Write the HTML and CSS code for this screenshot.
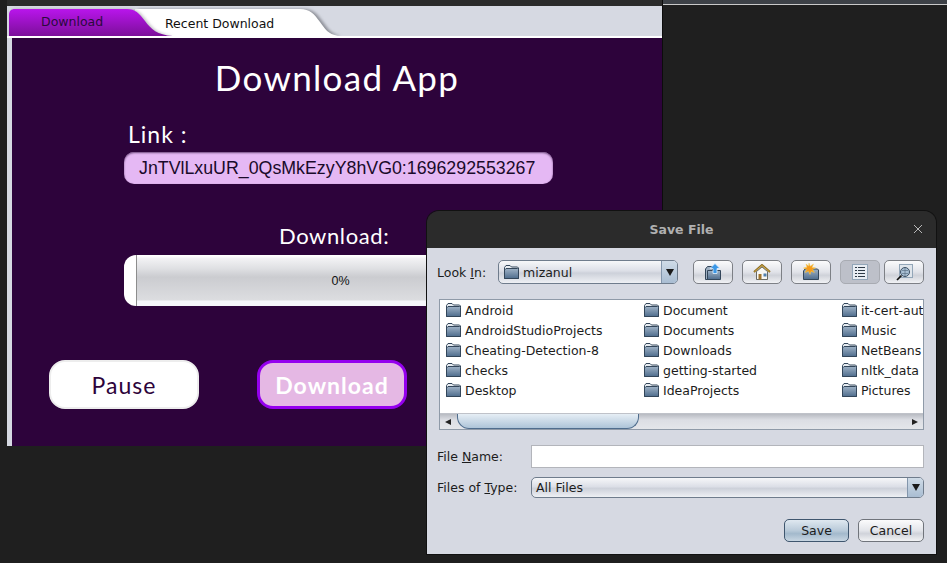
FILE: index.html
```html
<!DOCTYPE html>
<html>
<head>
  <meta charset="UTF-8">
  <title>Download App</title>
  <link rel="stylesheet" href="styles.css">
</head>
<body>
  <svg class="defs" width="0" height="0">
    <defs>
      <linearGradient id="folder-fill" x1="0" y1="0" x2="0" y2="1">
        <stop offset="0" stop-color="#9fb2c6"/>
        <stop offset="1" stop-color="#4f6d8d"/>
      </linearGradient>
      <linearGradient id="tab-on" x1="0" y1="0" x2="0" y2="1">
        <stop offset="0" stop-color="#b915ec"/>
        <stop offset="1" stop-color="#7c0f9a"/>
      </linearGradient>
      <filter id="tab-blur"><feGaussianBlur stdDeviation="1.6"/></filter>
      <symbol id="folder" viewBox="0 0 16 16">
        <path d="M1.5 14.5V3.5L3 1.5h4l1.5 1.5h6l1 1v10.500z" fill="#e8edf2" stroke="#33465a"/>
        <path d="M1.500 14.500V6L3 4.500h11.500l1 1v9z" fill="url(#folder-fill)" stroke="#33465a"/>
      </symbol>
    </defs>
  </svg>

  <div class="top-strip"></div>

  <div class="app-window">
    <div class="app-titlebar"></div>
    <div class="tab-bar">
      <svg class="tab-shapes" width="340" height="30" viewBox="0 0 340 30">
        <path d="M128 30V3h165c10 0 14 5 20 13 5 7 8 12 18 14z" fill="#8d9098" filter="url(#tab-blur)" transform="translate(3 0)"/>
        <path d="M128 30V3h165c10 0 14 5 20 13 5 7 8 12 18 14z" fill="#fff"/>
        <path d="M2 30V9c0-4 2-6 6-6h112c8 0 12 4 18 12 6 8 12 14 28 15z" fill="#8f9096" filter="url(#tab-blur)" opacity=".55" transform="translate(2 0)"/>
        <path d="M2 30V9c0-4 2-6 6-6h112c8 0 12 4 18 12 6 8 12 14 28 15z" fill="url(#tab-on)"/>
      </svg>
      <span class="tab tab-active">Download</span>
      <span class="tab">Recent Download</span>
    </div>
    <div class="tab-rule"></div>
    <div class="app-panel">
      <h1 class="app-title">Download App</h1>
      <div class="link-label">Link :</div>
      <div class="link-input">JnTVlLxuUR_0QsMkEzyY8hVG0:1696292553267</div>
      <div class="progress-label">Download:</div>
      <div class="progress">
        <div class="progress-cap"></div>
        <div class="progress-bar">0%</div>
      </div>
      <div class="app-actions">
        <button class="app-btn btn-pause">Pause</button>
        <button class="app-btn btn-download">Download</button>
      </div>
    </div>
  </div>

  <div class="dialog">
    <div class="dialog-titlebar">
      <span class="dialog-title">Save File</span>
      <svg class="dialog-close" width="10" height="10" viewBox="0 0 10 10"><path d="M1 1l8 8M9 1l-8 8" stroke="#b8b8b8"/></svg>
    </div>
    <div class="dialog-body">
      <div class="toolbar">
        <label class="look-label">Look <u>I</u>n:</label>
        <div class="combo combo-look">
          <svg class="icon" width="16" height="16"><use href="#folder"/></svg>
          <span class="combo-text">mizanul</span>
          <span class="combo-arrow"><i></i></span>
        </div>
        <div class="tool-group">
          <button class="tool-btn">
            <svg width="20" height="18" viewBox="0 0 20 18">
              <path d="M2.500 16.500V6l2-2.500h5v13z" fill="#9fb0c2" stroke="#33465a"/>
              <path d="M4.500 16.500V7.500h13v9z" fill="url(#folder-fill)" stroke="#33465a"/>
              <path d="M12 .5l5 5h-3v5h-4v-5H7z" fill="#3b97e6" stroke="#dff0ff" stroke-width=".8"/>
            </svg>
          </button>
          <button class="tool-btn">
            <svg width="18" height="16" viewBox="0 0 18 16">
              <path d="M1 8l8-7 8 7" fill="none" stroke="#8a6a1e" stroke-width="2"/>
              <path d="M1.500 7.800L9 1.500l7.500 6.300" fill="none" stroke="#e3bb55" stroke-width=".8"/>
              <path d="M3.500 7.500V15.500h11V7.500L9 3z" fill="#f7f7f4" stroke="#4a4a40" stroke-width=".8"/>
              <rect x="5.500" y="10" width="3" height="5.500" fill="#a0742c"/>
              <rect x="10.500" y="9.500" width="3" height="3" fill="#4f7fae"/>
            </svg>
          </button>
          <button class="tool-btn">
            <svg width="18" height="18" viewBox="0 0 18 18">
              <path d="M1.500 16.500V8l1.500-2h12.500l1 1v9.500z" fill="url(#folder-fill)" stroke="#33465a"/>
              <path d="M7 0l1.200 3.200L11.500 1 10 4.400l3.500.4-3 1.800 2 2.800-3.400-1L8 11.500 6.500 8.300 3 9.500l1.800-3L1.500 5l3.500-.7L4 1l2.600 2z" fill="#f59a1b" stroke="#f2d15c" stroke-width=".5"/>
            </svg>
          </button>
          <button class="tool-btn tool-btn-on">
            <svg width="16" height="16" viewBox="0 0 16 16">
              <rect x=".5" y=".5" width="15" height="15" fill="#e8edf3" stroke="#93a6b8"/>
              <path d="M3 3.500h2M6 3.500h7M3 6.500h2M6 6.500h7M3 9.500h2M6 9.500h7M3 12.500h2M6 12.500h7" stroke="#2e3a46"/>
            </svg>
          </button>
          <button class="tool-btn">
            <svg width="17" height="17" viewBox="0 0 17 17">
              <rect x="3.500" y=".5" width="13" height="13" fill="#dfe5eb" stroke="#93a6b8"/>
              <circle cx="9" cy="8" r="4.500" fill="#a9bfd3" stroke="#3d5064"/>
              <path d="M6 6.500h6M6 9.500h6M9 4v8" stroke="#5e7488" stroke-width=".7"/>
              <path d="M5.500 11.500L1 16" stroke="#111" stroke-width="1.700"/>
            </svg>
          </button>
        </div>
      </div>

      <div class="file-list">
        <div class="file-columns">
          <div class="file-column">
            <div class="file-row"><svg class="icon" width="16" height="16"><use href="#folder"/></svg>Android</div>
            <div class="file-row"><svg class="icon" width="16" height="16"><use href="#folder"/></svg>AndroidStudioProjects</div>
            <div class="file-row"><svg class="icon" width="16" height="16"><use href="#folder"/></svg>Cheating-Detection-8</div>
            <div class="file-row"><svg class="icon" width="16" height="16"><use href="#folder"/></svg>checks</div>
            <div class="file-row"><svg class="icon" width="16" height="16"><use href="#folder"/></svg>Desktop</div>
          </div>
          <div class="file-column">
            <div class="file-row"><svg class="icon" width="16" height="16"><use href="#folder"/></svg>Document</div>
            <div class="file-row"><svg class="icon" width="16" height="16"><use href="#folder"/></svg>Documents</div>
            <div class="file-row"><svg class="icon" width="16" height="16"><use href="#folder"/></svg>Downloads</div>
            <div class="file-row"><svg class="icon" width="16" height="16"><use href="#folder"/></svg>getting-started</div>
            <div class="file-row"><svg class="icon" width="16" height="16"><use href="#folder"/></svg>IdeaProjects</div>
          </div>
          <div class="file-column file-column-last">
            <div class="file-row"><svg class="icon" width="16" height="16"><use href="#folder"/></svg>it-cert-aut</div>
            <div class="file-row"><svg class="icon" width="16" height="16"><use href="#folder"/></svg>Music</div>
            <div class="file-row"><svg class="icon" width="16" height="16"><use href="#folder"/></svg>NetBeans</div>
            <div class="file-row"><svg class="icon" width="16" height="16"><use href="#folder"/></svg>nltk_data</div>
            <div class="file-row"><svg class="icon" width="16" height="16"><use href="#folder"/></svg>Pictures</div>
          </div>
        </div>
        <div class="scrollbar">
          <span class="scroll-arrow scroll-left"></span>
          <div class="scroll-track"><div class="scroll-thumb"></div></div>
          <span class="scroll-arrow scroll-right"></span>
        </div>
      </div>

      <div class="form-row form-row-name">
        <label class="form-label">File <u>N</u>ame:</label>
        <div class="text-field"></div>
      </div>
      <div class="form-row form-row-type">
        <label class="form-label">Files of <u>T</u>ype:</label>
        <div class="combo combo-type">
          <span class="combo-text">All Files</span>
          <span class="combo-arrow"><i></i></span>
        </div>
      </div>

      <div class="dialog-actions">
        <button class="swing-btn swing-btn-default">Save</button>
        <button class="swing-btn">Cancel</button>
      </div>
    </div>
  </div>
</body>
</html>
```

FILE: styles.css
```css
html, body {
  margin: 0;
  padding: 0;
  height: 100%;
  overflow: hidden;
}

body {
  background-color: #1f1f1f;
  position: relative;
  font-family: "DejaVu Sans", sans-serif;
}

.defs {
  position: absolute;
}

.top-strip {
  position: absolute;
  left: 663px;
  right: 0;
  top: 0;
  height: 4px;
  background-color: #3d4147;
  border-bottom: 1px solid #c9c9c9;
}

/* app window */
.app-window {
  position: absolute;
  left: 7px;
  top: 0;
  width: 655px;
  height: 446px;
  display: flex;
  flex-direction: column;
  background-color: #d6d9e2;
  border-right: 1px solid #0c0c0c;
}

.app-titlebar {
  height: 6px;
  background-color: #2b2b2b;
}

.tab-bar {
  position: relative;
  height: 30px;
  display: flex;
  font-size: 12.500px;
}

.tab-shapes {
  position: absolute;
  left: 0;
  top: 0;
}

.tab {
  position: relative;
  padding: 10px 0 0 25px;
  color: #111;
}

.tab-active {
  width: 99px;
  padding: 8px 0 0 34px;
  color: #2a0a3c;
}

.tab-rule {
  height: 2px;
  background-color: #fff;
}

.app-panel {
  flex: 1;
  margin-left: 5px;
  background-color: #2d033b;
  color: #fff;
  font-family: "Lato", sans-serif;
  display: flex;
  flex-direction: column;
}

.app-title {
  margin: 18px 0 0;
  height: 42px;
  line-height: 42px;
  text-align: center;
  font-size: 35px;
  font-weight: 400;
  letter-spacing: 1.300px;
  width: 650px;
}

.link-label {
  margin: 22px 0 0 116px;
  font-size: 23px;
  line-height: 28px;
  letter-spacing: 1px;
}

.link-input {
  margin: 4px 0 0 112px;
  width: 429px;
  height: 32px;
  line-height: 33px;
  box-sizing: border-box;
  padding-left: 15px;
  background-color: #e5b8f4;
  border-radius: 10px;
  box-shadow: inset 0 1px 2px #6d4a7c;
  color: #1a0a2a;
  font-family: "Liberation Sans", sans-serif;
  font-size: 17.800px;
  white-space: nowrap;
}

.progress-label {
  margin: 38px 0 0 267px;
  font-size: 22px;
  line-height: 28px;
  letter-spacing: .6px;
}

.progress {
  margin: 5px 0 0 112px;
  width: 420px;
  height: 51px;
  display: flex;
  background-color: #fff;
  border-radius: 12px;
  overflow: hidden;
}

.progress-cap {
  width: 12px;
  border-right: 1px solid #8d8d8d;
}

.progress-bar {
  flex: 1;
  margin-top: 1px;
  display: flex;
  align-items: center;
  justify-content: center;
  background: linear-gradient(#fff, #f2f2f4 5%, #dfe0e3 25%, #cbccd0 42%, #dcdde0 88%, #f6f6fb 90%, #f6f6fb 100%);
  color: #111;
  font-family: "Liberation Sans", sans-serif;
  font-size: 12.500px;
}

.app-actions {
  display: flex;
  gap: 58px;
  margin: 54px 0 0 37px;
}

.app-btn {
  width: 150px;
  height: 49px;
  box-sizing: border-box;
  border-radius: 16px;
  font-family: "Lato", sans-serif;
  font-size: 23px;
  letter-spacing: 1px;
  padding: 0;
}

.btn-pause {
  background-color: #fff;
  border: 2px solid #ededed;
  color: #2d033b;
}

.btn-download {
  background-color: #e5b8e4;
  border: 3px solid #9500ee;
  color: #fff;
  font-weight: 700;
}

/* save dialog */
.dialog {
  position: absolute;
  left: 427px;
  top: 211px;
  width: 509px;
  height: 343px;
  border-radius: 12px 12px 0 0;
  overflow: hidden;
  display: flex;
  flex-direction: column;
  box-shadow: 0 0 0 1px #111;
  font-size: 12.500px;
  color: #1c1c1c;
}

.dialog-titlebar {
  height: 37px;
  flex-shrink: 0;
  display: flex;
  align-items: center;
  justify-content: center;
  position: relative;
  background-color: #2b2b2b;
}

.dialog-title {
  color: #b0b0b0;
  font-size: 12.500px;
  font-weight: 700;
}

.dialog-close {
  position: absolute;
  right: 13px;
  top: 13px;
}

.dialog-body {
  flex: 1;
  background-color: #d6d9e2;
  padding: 12px 12px 0 10px;
  display: flex;
  flex-direction: column;
}

.toolbar {
  display: flex;
  align-items: center;
  height: 24px;
}

.look-label {
  width: 61px;
}

.combo {
  display: flex;
  align-items: center;
  box-sizing: border-box;
  border: 1px solid #6f7c8c;
  border-radius: 5px;
  background: linear-gradient(#f6f7f9, #dcdfe7 45%, #cdd1da 55%, #eef0f4);
  overflow: hidden;
}

.combo-look {
  width: 180px;
  height: 24px;
  padding-left: 4px;
}

.combo-type {
  flex: 1;
  height: 21px;
  padding-left: 4px;
}

.combo-text {
  flex: 1;
  margin-left: 4px;
}

.combo-type .combo-text {
  margin-left: 0;
}

.combo-arrow {
  width: 15px;
  align-self: stretch;
  display: flex;
  align-items: center;
  justify-content: center;
  border-left: 1px solid #8396ac;
  background: linear-gradient(#cfdbe7, #a9bdd2);
}

.combo-arrow i {
  width: 0;
  height: 0;
  border-left: 4px solid transparent;
  border-right: 4px solid transparent;
  border-top: 7px solid #1a1a1a;
}

.icon {
  flex-shrink: 0;
}

.tool-group {
  display: flex;
  margin-left: 15px;
  gap: 9px;
}

.tool-btn {
  width: 40px;
  height: 24px;
  box-sizing: border-box;
  padding: 0;
  display: flex;
  align-items: center;
  justify-content: center;
  border: 1px solid #7d8086;
  border-radius: 5px;
  background: linear-gradient(#fbfbfc, #e1e3e9 50%, #cfd2d9 65%, #f1f2f5);
}

.tool-btn-on {
  border-color: #a8abb2;
  background: #bdc0c9;
}

.tool-btn-on + .tool-btn {
  margin-left: -5px;
}

.file-list {
  margin: 15px 0 0 2px;
  height: 129px;
  border: 1px solid #8f9aa8;
  background-color: #fff;
  display: flex;
  flex-direction: column;
  overflow: hidden;
}

.file-columns {
  flex: 1;
  display: flex;
  padding: 0 0 0 5px;
}

.file-column {
  width: 198px;
  flex-shrink: 0;
}

.file-column-last {
  width: auto;
  flex: 1;
  min-width: 0;
  overflow: hidden;
}

.file-row {
  height: 20px;
  display: flex;
  align-items: center;
  gap: 4px;
  white-space: nowrap;
}

.scrollbar {
  height: 15px;
  display: flex;
  align-items: center;
  border-top: 1px solid #bfc2c9;
  background: linear-gradient(#b8bbc2, #dcdee4 40%, #e4e6ea);
}

.scroll-arrow {
  width: 0;
  height: 0;
  border-top: 3px solid transparent;
  border-bottom: 3px solid transparent;
}

.scroll-left {
  margin: 0 6px 0 5px;
  border-right: 6px solid #222;
}

.scroll-right {
  margin: 0 5px 0 6px;
  border-left: 6px solid #222;
}

.scroll-track {
  flex: 1;
  align-self: stretch;
}

.scroll-thumb {
  width: 182px;
  height: 15px;
  box-sizing: border-box;
  border: 1px solid #4f6d8d;
  border-top: none;
  border-radius: 0 0 12px 12px;
  background: linear-gradient(#e6eef5, #c4d5e4 60%, #adc4d8);
}

.form-row {
  display: flex;
  align-items: center;
}

.form-row-name {
  margin-top: 15px;
}

.form-row-type {
  margin-top: 9px;
}

.form-label {
  width: 94px;
  flex-shrink: 0;
}

.text-field {
  flex: 1;
  height: 23px;
  box-sizing: border-box;
  background-color: #fff;
  border: 1px solid #b3b5bb;
}

.dialog-actions {
  display: flex;
  justify-content: flex-end;
  gap: 9px;
  margin-top: 21px;
}

.swing-btn {
  width: 66px;
  height: 23px;
  box-sizing: border-box;
  padding: 0;
  border: 1px solid #70747b;
  border-radius: 5px;
  background: linear-gradient(#fbfbfc, #e3e5ea 50%, #d0d3da 65%, #f2f3f5);
  font-family: "DejaVu Sans", sans-serif;
  font-size: 12.500px;
  color: #1c1c1c;
}

.swing-btn-default {
  width: 65px;
  border-color: #3f566e;
  background: linear-gradient(#dfe8f0, #b9cad9 50%, #a3b9cc 65%, #c8d6e2);
}
```
